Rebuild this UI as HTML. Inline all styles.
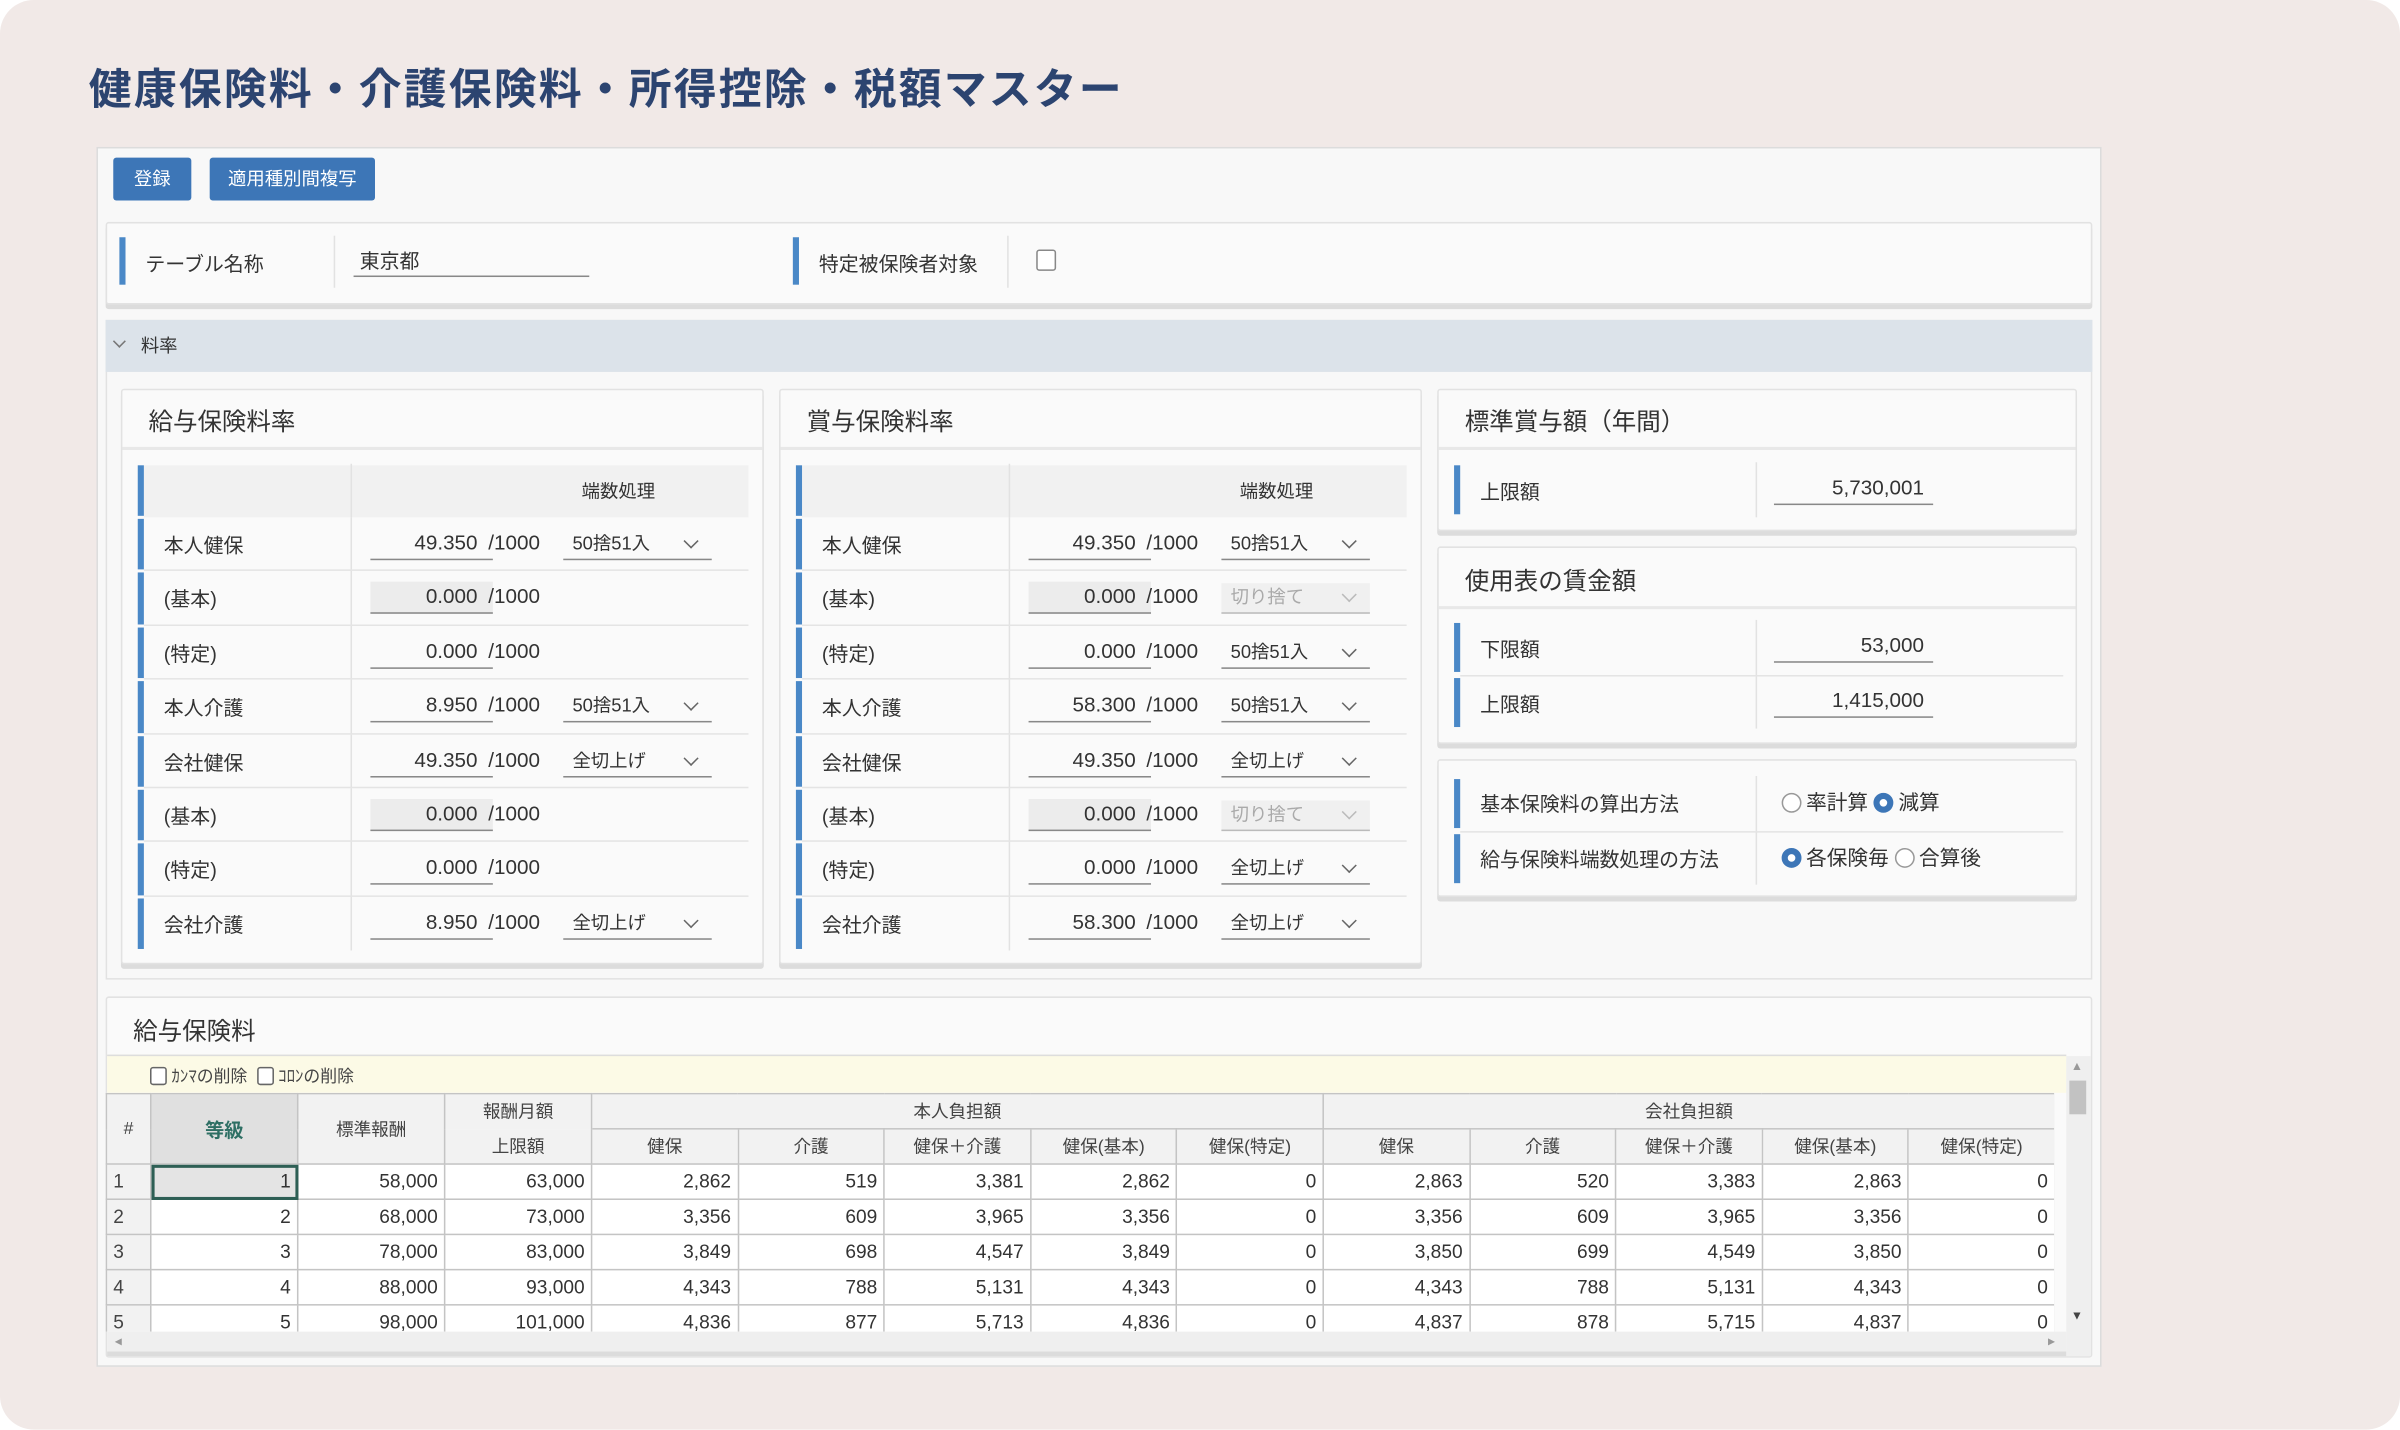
<!DOCTYPE html>
<html><head><meta charset="utf-8">
<style>
*{box-sizing:border-box;margin:0;padding:0}
html,body{width:2400px;height:1429px;overflow:hidden;background:#fff}
body{font-family:"Liberation Sans","Noto Sans CJK JP",sans-serif;color:#333}
#s{position:absolute;left:0;top:0;width:1568px;height:934px;transform:scale(1.5306);transform-origin:0 0}
.bg{position:absolute;left:0;top:0;width:1568px;height:934px;background:#f1e9e7;border-radius:22px}
.a{position:absolute}
h1{position:absolute;left:58px;top:37px;font-size:28px;font-weight:bold;color:#2c4470;letter-spacing:1.4px;font-family:"Noto Sans CJK JP",sans-serif}
.main{left:63px;top:96px;width:1310px;height:797px;background:#f8f8f8;border:1px solid #dcdcdc}
.btn{background:#3d76b7;color:#fff;font-size:12px;border-radius:2px;text-align:center;line-height:28px;height:28px;top:103px}
.card{background:#fafafa;border:1px solid #e2e2e2;box-shadow:0 3px 0 #dcdcdc;border-radius:2px}
.bar{position:absolute;width:4px;background:#4a88c7}
.lbl{position:absolute;font-size:13px;color:#333}
.sep{position:absolute;width:1px;background:#e2e2e2}
.ttl{position:absolute;font-size:16px;color:#333}
.hl{position:absolute;left:0;right:0;height:2px;background:#e8e8e8}
.row{position:absolute;left:0;width:419px;height:35.4px}
.row .bar{left:10px;top:1px;bottom:1px}
.row .lbl{left:27px;top:8px}
.row .sep{left:149px;top:0;bottom:0}
.row .ln{position:absolute;left:14px;right:10px;bottom:0;height:1px;background:#e4e4e4}
.inp{position:absolute;left:162px;top:7px;width:80px;height:21px;border-bottom:1px solid #888;text-align:right;font-size:13.5px;padding-right:10px;line-height:20px;color:#333}
.g{background:#ececec}
.per{position:absolute;left:239px;top:7px;font-size:13.5px;line-height:20px}
.sel{position:absolute;left:288px;top:8px;width:97px;height:20px;border-bottom:1px solid #888;font-size:12px;line-height:19px;padding-left:6px}
.sel:after{content:"";position:absolute;right:10px;top:4px;width:6px;height:6px;border-right:1.3px solid #666;border-bottom:1.3px solid #666;transform:rotate(45deg)}
.sel.d{color:#aaa;background:#f0f0f0;border-bottom-color:#bbb}
.sel.d:after{border-color:#bbb}
table{border-collapse:collapse;table-layout:fixed;font-family:"Liberation Sans","Noto Sans CJK JP",sans-serif;font-size:12.5px}
td,th{border:1px solid #c4c4c4;height:23px;padding:0 4px;white-space:nowrap;overflow:hidden}
th{background:#f2f2f2;font-weight:normal;font-size:11.5px;color:#444}
td{background:#fff;text-align:right;color:#333}
td.n{background:#f2f2f2;text-align:left;color:#444}
.radio{display:inline-block;width:13px;height:13px;border:1px solid #999;border-radius:50%;vertical-align:-2px;margin-right:3px;background:#fff}
.radio.on{border:4px solid #3d76b7}
</style></head><body>
<div id="s">
<div class="bg"></div>
<h1>健康保険料・介護保険料・所得控除・税額マスター</h1>
<div class="a main"></div>
<div class="a btn" style="left:74px;width:51px">登録</div>
<div class="a btn" style="left:137px;width:108px">適用種別間複写</div>

<div class="a card" style="left:69px;top:145px;width:1298px;height:54px"></div>
<div class="bar" style="left:78px;top:155px;height:31px"></div>
<div class="lbl" style="left:95px;top:162px">テーブル名称</div>
<div class="sep" style="left:218px;top:154px;height:34px"></div>
<div class="a" style="left:231px;top:160px;width:154px;height:21px;border-bottom:1px solid #888;font-size:13px;padding-left:4px">東京都</div>
<div class="bar" style="left:518px;top:155px;height:31px"></div>
<div class="lbl" style="left:535px;top:162px">特定被保険者対象</div>
<div class="sep" style="left:658px;top:154px;height:34px"></div>
<div class="a" style="left:677px;top:163px;width:13px;height:14px;border:1px solid #888;border-radius:2px;background:#fff"></div>

<div class="a" style="left:69px;top:209px;width:1298px;height:431px;border:1px solid #e2e2e2;background:#f8f8f8"></div>
<div class="a" style="left:69px;top:209px;width:1298px;height:34px;background:#dce3ea"></div>
<div class="a" style="left:75px;top:220px;width:6px;height:6px;border-right:1.3px solid #777;border-bottom:1.3px solid #777;transform:rotate(45deg)"></div>
<div class="lbl" style="left:92px;top:217px;font-size:12px">料率</div>

<div class="a card" style="left:79px;top:254px;width:420px;height:376px">
<div class="ttl" style="left:17px;top:7px">給与保険料率</div>
<div class="hl" style="top:37px"></div>
<div class="a" style="left:14px;top:49px;width:395px;height:34px;background:#f1f1f1"></div>
<div class="row" style="top:48px"><div class="bar"></div><div class="sep"></div><div class="lbl" style="left:300px;top:9px;font-size:12px">端数処理</div></div>
<div class="row" style="top:83px"><div class="bar"></div><div class="lbl">本人健保</div><div class="sep"></div><div class="inp">49.350</div><div class="per">/1000</div><div class="sel">50捨51入</div><div class="ln"></div></div>
<div class="row" style="top:118.4px"><div class="bar"></div><div class="lbl">(基本)</div><div class="sep"></div><div class="inp g">0.000</div><div class="per">/1000</div><div class="ln"></div></div>
<div class="row" style="top:153.8px"><div class="bar"></div><div class="lbl">(特定)</div><div class="sep"></div><div class="inp">0.000</div><div class="per">/1000</div><div class="ln"></div></div>
<div class="row" style="top:189.2px"><div class="bar"></div><div class="lbl">本人介護</div><div class="sep"></div><div class="inp">8.950</div><div class="per">/1000</div><div class="sel">50捨51入</div><div class="ln"></div></div>
<div class="row" style="top:224.6px"><div class="bar"></div><div class="lbl">会社健保</div><div class="sep"></div><div class="inp">49.350</div><div class="per">/1000</div><div class="sel">全切上げ</div><div class="ln"></div></div>
<div class="row" style="top:260px"><div class="bar"></div><div class="lbl">(基本)</div><div class="sep"></div><div class="inp g">0.000</div><div class="per">/1000</div><div class="ln"></div></div>
<div class="row" style="top:295.4px"><div class="bar"></div><div class="lbl">(特定)</div><div class="sep"></div><div class="inp">0.000</div><div class="per">/1000</div><div class="ln"></div></div>
<div class="row" style="top:330.8px"><div class="bar"></div><div class="lbl">会社介護</div><div class="sep"></div><div class="inp">8.950</div><div class="per">/1000</div><div class="sel">全切上げ</div></div>
</div>

<div class="a card" style="left:509px;top:254px;width:420px;height:376px">
<div class="ttl" style="left:17px;top:7px">賞与保険料率</div>
<div class="hl" style="top:37px"></div>
<div class="a" style="left:14px;top:49px;width:395px;height:34px;background:#f1f1f1"></div>
<div class="row" style="top:48px"><div class="bar"></div><div class="sep"></div><div class="lbl" style="left:300px;top:9px;font-size:12px">端数処理</div></div>
<div class="row" style="top:83px"><div class="bar"></div><div class="lbl">本人健保</div><div class="sep"></div><div class="inp">49.350</div><div class="per">/1000</div><div class="sel">50捨51入</div><div class="ln"></div></div>
<div class="row" style="top:118.4px"><div class="bar"></div><div class="lbl">(基本)</div><div class="sep"></div><div class="inp g">0.000</div><div class="per">/1000</div><div class="sel d">切り捨て</div><div class="ln"></div></div>
<div class="row" style="top:153.8px"><div class="bar"></div><div class="lbl">(特定)</div><div class="sep"></div><div class="inp">0.000</div><div class="per">/1000</div><div class="sel">50捨51入</div><div class="ln"></div></div>
<div class="row" style="top:189.2px"><div class="bar"></div><div class="lbl">本人介護</div><div class="sep"></div><div class="inp">58.300</div><div class="per">/1000</div><div class="sel">50捨51入</div><div class="ln"></div></div>
<div class="row" style="top:224.6px"><div class="bar"></div><div class="lbl">会社健保</div><div class="sep"></div><div class="inp">49.350</div><div class="per">/1000</div><div class="sel">全切上げ</div><div class="ln"></div></div>
<div class="row" style="top:260px"><div class="bar"></div><div class="lbl">(基本)</div><div class="sep"></div><div class="inp g">0.000</div><div class="per">/1000</div><div class="sel d">切り捨て</div><div class="ln"></div></div>
<div class="row" style="top:295.4px"><div class="bar"></div><div class="lbl">(特定)</div><div class="sep"></div><div class="inp">0.000</div><div class="per">/1000</div><div class="sel">全切上げ</div><div class="ln"></div></div>
<div class="row" style="top:330.8px"><div class="bar"></div><div class="lbl">会社介護</div><div class="sep"></div><div class="inp">58.300</div><div class="per">/1000</div><div class="sel">全切上げ</div></div>
</div>

<div class="a card" style="left:939px;top:254px;width:418px;height:93px">
<div class="ttl" style="left:17px;top:7px">標準賞与額（年間）</div>
<div class="hl" style="top:37px"></div>
<div class="bar" style="left:10px;top:49px;height:32px"></div>
<div class="lbl" style="left:27px;top:56px">上限額</div>
<div class="sep" style="left:207px;top:47px;height:36px"></div>
<div class="a" style="left:219px;top:54px;width:104px;height:21px;border-bottom:1px solid #888;text-align:right;font-size:13.5px;padding-right:6px;line-height:20px">5,730,001</div>
</div>
<div class="a card" style="left:939px;top:357px;width:418px;height:129px">
<div class="ttl" style="left:17px;top:8px">使用表の賃金額</div>
<div class="hl" style="top:38px"></div>
<div class="bar" style="left:10px;top:49px;height:32px"></div>
<div class="lbl" style="left:27px;top:56px">下限額</div>
<div class="sep" style="left:207px;top:47px;height:71px"></div>
<div class="a" style="left:219px;top:54px;width:104px;height:21px;border-bottom:1px solid #888;text-align:right;font-size:13.5px;padding-right:6px;line-height:20px">53,000</div>
<div class="a" style="left:14px;top:83px;width:394px;height:1px;background:#e4e4e4"></div>
<div class="bar" style="left:10px;top:85px;height:32px"></div>
<div class="lbl" style="left:27px;top:92px">上限額</div>
<div class="a" style="left:219px;top:90px;width:104px;height:21px;border-bottom:1px solid #888;text-align:right;font-size:13.5px;padding-right:6px;line-height:20px">1,415,000</div>
</div>
<div class="a card" style="left:939px;top:496px;width:418px;height:90px">
<div class="bar" style="left:10px;top:12px;height:32px"></div>
<div class="lbl" style="left:27px;top:18px">基本保険料の算出方法</div>
<div class="sep" style="left:207px;top:10px;height:71px"></div>
<div class="a" style="left:224px;top:16px;font-size:13.5px"><span class="radio"></span>率計算 <span class="radio on"></span>減算</div>
<div class="a" style="left:14px;top:46px;width:394px;height:1px;background:#e4e4e4"></div>
<div class="bar" style="left:10px;top:48px;height:32px"></div>
<div class="lbl" style="left:27px;top:54px">給与保険料端数処理の方法</div>
<div class="a" style="left:224px;top:52px;font-size:13.5px"><span class="radio on"></span>各保険毎 <span class="radio"></span>合算後</div>
</div>

<div class="a card" style="left:69px;top:651px;width:1298px;height:236px;box-shadow:none">
<div class="ttl" style="left:17px;top:8px">給与保険料</div>
</div>
<div class="a" style="left:70px;top:689px;width:1280px;height:25px;background:#fcfae6;border-top:1px solid #ddd"></div>
<div class="a" style="left:98px;top:695px;font-size:11px;color:#444"><span style="display:inline-block;width:11px;height:12px;border:1px solid #666;border-radius:2px;vertical-align:-2px;background:#fff"></span> ｶﾝﾏの削除 &nbsp;<span style="display:inline-block;width:11px;height:12px;border:1px solid #666;border-radius:2px;vertical-align:-2px;background:#fff"></span> ｺﾛﾝの削除</div>
<div class="a" style="left:69px;top:714px;width:1273px;height:156px;overflow:hidden;background:#fff">
<table style="width:1273px">
<colgroup><col style="width:29px"><col style="width:96px"><col style="width:96px"><col style="width:96px"><col style="width:95.6px"><col style="width:95.6px"><col style="width:95.6px"><col style="width:95.6px"><col style="width:95.6px"><col style="width:95.6px"><col style="width:95.6px"><col style="width:95.6px"><col style="width:95.6px"><col style="width:95.6px"></colgroup>
<tr><th rowspan="2">#</th><th rowspan="2" style="background:#e0e0e0;color:#2e6f64;font-weight:bold;font-size:12.5px">等級</th><th rowspan="2">標準報酬</th><th style="border-bottom:none">報酬月額</th><th colspan="5">本人負担額</th><th colspan="5">会社負担額</th></tr>
<tr><th style="border-top:none">上限額</th><th>健保</th><th>介護</th><th>健保＋介護</th><th>健保(基本)</th><th>健保(特定)</th><th>健保</th><th>介護</th><th>健保＋介護</th><th>健保(基本)</th><th>健保(特定)</th></tr>
<tr><td class="n">1</td><td style="background:#e4e4e4;outline:2px solid #2e5f55;outline-offset:-2px">1</td><td>58,000</td><td>63,000</td><td>2,862</td><td>519</td><td>3,381</td><td>2,862</td><td>0</td><td>2,863</td><td>520</td><td>3,383</td><td>2,863</td><td>0</td></tr>
<tr><td class="n">2</td><td>2</td><td>68,000</td><td>73,000</td><td>3,356</td><td>609</td><td>3,965</td><td>3,356</td><td>0</td><td>3,356</td><td>609</td><td>3,965</td><td>3,356</td><td>0</td></tr>
<tr><td class="n">3</td><td>3</td><td>78,000</td><td>83,000</td><td>3,849</td><td>698</td><td>4,547</td><td>3,849</td><td>0</td><td>3,850</td><td>699</td><td>4,549</td><td>3,850</td><td>0</td></tr>
<tr><td class="n">4</td><td>4</td><td>88,000</td><td>93,000</td><td>4,343</td><td>788</td><td>5,131</td><td>4,343</td><td>0</td><td>4,343</td><td>788</td><td>5,131</td><td>4,343</td><td>0</td></tr>
<tr><td class="n">5</td><td>5</td><td>98,000</td><td>101,000</td><td>4,836</td><td>877</td><td>5,713</td><td>4,836</td><td>0</td><td>4,837</td><td>878</td><td>5,715</td><td>4,837</td><td>0</td></tr>
</table></div>
<div class="a" style="left:70px;top:870px;width:1280px;height:16px;background:#efefef;border-bottom:3px solid #dcdcdc"></div>
<div class="a" style="left:75px;top:871px;font-size:9px;color:#999">◂</div>
<div class="a" style="left:1338px;top:871px;font-size:9px;color:#999">▸</div>
<div class="a" style="left:1350px;top:690px;width:16px;height:196px;background:#efefef"></div>
<div class="a" style="left:1352px;top:706px;width:11px;height:22px;background:#c2c2c2"></div>
<div class="a" style="left:1353px;top:692px;font-size:8px;color:#999">▲</div>
<div class="a" style="left:1353px;top:855px;font-size:8px;color:#444">▼</div>
</div>
</body></html>
